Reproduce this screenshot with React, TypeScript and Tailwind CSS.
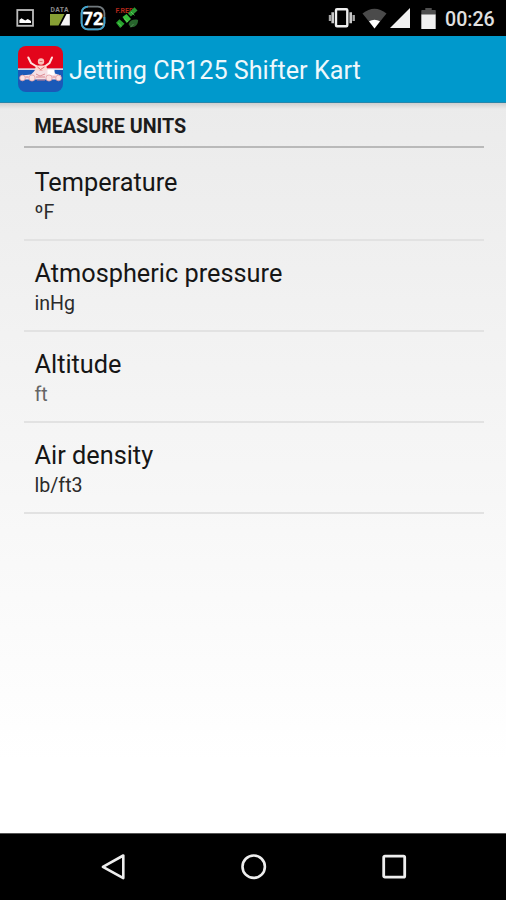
import React from 'react';

interface UnitSetting {
  title: string;
  value: string;
  muted?: boolean;
}

const settings: UnitSetting[] = [
  { title: 'Temperature', value: 'ºF' },
  { title: 'Atmospheric pressure', value: 'inHg' },
  { title: 'Altitude', value: 'ft', muted: true },
  { title: 'Air density', value: 'lb/ft3' },
];

const PictureIcon: React.FC = () => (
  <svg className="h-[18px] w-[18px]" viewBox="0 0 18 18">
    <rect x="1.3" y="1" width="15.7" height="15.8" fill="none" stroke="#bdbdbd" strokeWidth="1.8" />
    <path d="M3.4 14v-3l2-1.8 2.2 1.3 1.6 1 2.6-1.4 3.2 1.8V14z" fill="#fff" />
  </svg>
);

const DataIcon: React.FC = () => (
  <svg className="h-[21px] w-[22px]" viewBox="0 0 22 21">
    <text x="1.5" y="5.8" fontSize="6.8" fontWeight="700" textLength="18" fill="#8c8c8c" fontFamily="Roboto, sans-serif">DATA</text>
    <path d="M1 8h14.500L9.500 19.500H1z" fill="#87a034" />
    <path d="M20.800 8v11.500h-9.300L17.500 8z" fill="#f5f5f5" />
  </svg>
);

const BadgeIcon: React.FC = () => (
  <svg className="h-[26px] w-[26px]" viewBox="0 0 26 26">
    <rect x="1.6" y="1.6" width="22.8" height="22.8" rx="6.5" fill="#000" stroke="#71797d" strokeWidth="1.8" />
    <path d="M8 1.600a6.400 6.400 0 0 0-6.400 6.400v10a6.400 6.400 0 0 0 6.400 6.400h10a6.400 6.400 0 0 0 6.400-6.400v-6" fill="none" stroke="#3fa4cd" strokeWidth="1.8" />
    <text x="13" y="19.700" fontSize="18.5" fontWeight="700" textAnchor="middle" textLength="20.5" lengthAdjust="spacingAndGlyphs" fill="#fff" stroke="#fff" strokeWidth=".4" fontFamily="Roboto, sans-serif">72</text>
  </svg>
);

const SatelliteIcon: React.FC = () => (
  <svg className="h-[24px] w-[24px]" viewBox="0 0 24 24">
    <text x="0.5" y="7" fontSize="7" fontWeight="700" textLength="18" fill="#b3271a" fontFamily="Roboto, sans-serif">F.RED</text>
    <path d="M19.500 1.200l3 3.200-6.600 6-3-3z" fill="#2b9a32" />
    <path d="M7.500 11l4-3 4.500 5-4.300 4z" fill="#38bd3b" />
    <path d="M4.500 13.300l5 4.500-4.300 4.200L1 16.800z" fill="#27a32d" />
    <path d="M3 16.800l3.600 3.400M16 6l3.500 3.300M9 12.500l4 3.500" stroke="#6ad662" strokeWidth=".8" />
    <path d="M13.500 18c1.500-3.800 5.500-5.200 9.600-4-.1 4.600-2.600 7.600-7.600 7.200z" fill="#27642c" />
    <path d="M15.500 21.200l3-3.200" stroke="#55885a" strokeWidth="1" />
  </svg>
);

const VibrateIcon: React.FC = () => (
  <svg className="h-[22px] w-[28px]" viewBox="0 0 28 22">
    <rect x="8" y="2.3" width="11.3" height="17" rx="1" fill="none" stroke="#eee" strokeWidth="2.4" />
    <path d="M4.700 5.300v11M22.700 5.300v11" stroke="#c9c9c9" strokeWidth="2.6" />
    <path d="M2 8v6M25.700 8v6" stroke="#a8a8a8" strokeWidth="2.4" />
  </svg>
);

const WifiIcon: React.FC = () => (
  <svg className="h-[21px] w-[25px]" viewBox="0 0 25 21">
    <path d="M.5 5.500Q12.500-4 24.500 5.500L12.500 20.500z" fill="#4b4b4b" />
    <path d="M7 13.300Q12.500 10.300 18 13.300L12.500 20.500z" fill="#fff" />
  </svg>
);

const SignalIcon: React.FC = () => (
  <svg className="h-[20px] w-[20px]" viewBox="0 0 20 20">
    <path d="M20 0v20H0z" fill="#f1f1f1" />
  </svg>
);

const BatteryIcon: React.FC = () => (
  <svg className="h-[21px] w-[15px]" viewBox="0 0 15 21">
    <path d="M4.300 0h6.400v2H14a.8.8 0 0 1 .8.8V7H.3V2.800a.8.8 0 0 1 .8-.8h3.200z" fill="#505050" />
    <path d="M.3 6.500h14.400V21H.3z" fill="#f1f1f1" />
  </svg>
);

const AppLogo: React.FC = () => (
  <svg className="h-[46px] w-[45px]" viewBox="0 0 45 46">
    <defs>
      <clipPath id="logo-shape">
        <rect width="45" height="46" rx="8" />
      </clipPath>
    </defs>
    <g clipPath="url(#logo-shape)">
      <rect width="45" height="23" fill="#e3051b" />
      <rect y="22.3" width="45" height="1.7" fill="#d7d3e3" />
      <rect y="24" width="45" height="22" fill="#1a59b8" />
    </g>
    {/* driver with raised arms */}
    <path d="M10.300 11.500l2.700 5.500 6.500 4M34 11.500l-2.500 5.500-5.500 4" fill="none" stroke="#ffe3dd" strokeWidth="2" strokeLinecap="round" />
    <path d="M18 19.500h10l2.500 8H16z" fill="#ffd7d1" />
    <circle cx="23" cy="15.5" r="3.2" fill="#f9c1b9" />
    <path d="M21.500 15.500h3M19.500 21l3 2.500 4-2.500M20 26l3-2 3 2" stroke="#d85b59" strokeWidth=".8" fill="none" />
    {/* kart */}
    <path d="M3 29.500l10-1 4-4h10l4-1.500h4l2 4.500 6 2v4H3z" fill="#f6dfe3" />
    <path d="M29.500 23.500h7v5.500h-7z" fill="#fff" />
    <g fill="#fbe3e3" stroke="#e09ba2" strokeWidth=".8">
      <circle cx="4.5" cy="32" r="2.8" />
      <circle cx="14" cy="32" r="3.1" />
      <circle cx="31" cy="32" r="3.1" />
      <circle cx="40.5" cy="32" r="2.8" />
    </g>
    <path d="M7.500 31h3M18 31h9M18 28l4 2 5-2M34.500 31h3M19 34h8" stroke="#d98089" strokeWidth=".9" fill="none" />
  </svg>
);

const StatusBar: React.FC = () => (
  <div className="flex h-9 items-center justify-between bg-black pl-4 pr-[11px]">
    <div className="flex items-center">
      <PictureIcon />
      <div className="ml-[15px] -mt-1"><DataIcon /></div>
      <div className="ml-[9px]"><BadgeIcon /></div>
      <div className="ml-[9px]"><SatelliteIcon /></div>
    </div>
    <div className="flex items-center">
      <VibrateIcon />
      <div className="ml-[6px]"><WifiIcon /></div>
      <div className="ml-[3px]"><SignalIcon /></div>
      <div className="ml-[11px]"><BatteryIcon /></div>
      <span className="ml-[9px] w-[50px] whitespace-nowrap pt-[3px] text-[19.6px] font-medium leading-8 text-[#e0e0e0]">00:26</span>
    </div>
  </div>
);

const NavBar: React.FC = () => (
  <div className="flex h-[67px] items-center justify-between border-t border-[#555] bg-black pl-[100px] pr-[98px]">
    <svg className="h-7 w-7" viewBox="0 0 28 28" fill="none" stroke="#eee" strokeWidth="2.6">
      <path d="M23.300 2.500v22.600L2.900 13.800z" strokeLinejoin="round" />
    </svg>
    <svg className="h-7 w-7" viewBox="0 0 28 28" fill="none" stroke="#eee" strokeWidth="2.6">
      <circle cx="13.7" cy="13.7" r="11.2" />
    </svg>
    <svg className="h-7 w-7" viewBox="0 0 28 28" fill="none" stroke="#eee" strokeWidth="2.8">
      <rect x="3.7" y="3.2" width="21" height="21" rx="1.2" />
    </svg>
  </div>
);

export default function App() {
  return (
    <div className="flex h-[900px] w-[506px] flex-col overflow-hidden bg-black font-[Roboto,sans-serif]">
      <StatusBar />
      <header className="flex h-[67px] items-center border-b border-[#2786ab] bg-[#0099cc] pl-[18px]">
        <AppLogo />
        <h1 className="ml-[6px] whitespace-nowrap pt-1 text-[25.2px] text-[#eef8fc]">Jetting CR125 Shifter Kart</h1>
      </header>
      <main className="flex-1 bg-linear-to-b from-[#ebebeb] to-white to-90% pl-6 pr-[22px]">
        <div className="-ml-6 -mr-[22px] h-[6px] bg-linear-to-b from-[#cfcfcf] to-[#ebebeb]" />
        <h2 className="h-[39px] border-b-[2.5px] border-[#b9b9b9] pl-[10.5px] text-[19.7px] font-bold leading-[36px] text-[#1c1c1c]">
          MEASURE UNITS
        </h2>
        <div className="pt-0.5">
          {settings.map((item) => (
            <div key={item.title} className="h-[91px] border-b-2 border-[#e2e2e2] pl-[10.5px] pt-[17px]">
              <div className="text-[25.3px] leading-8 text-[#161616]">{item.title}</div>
              <div className={`text-[19.6px] leading-7 ${item.muted ? 'text-[#666]' : 'text-[#2b2b2b]'}`}>
                {item.value}
              </div>
            </div>
          ))}
        </div>
      </main>
      <NavBar />
    </div>
  );
}
